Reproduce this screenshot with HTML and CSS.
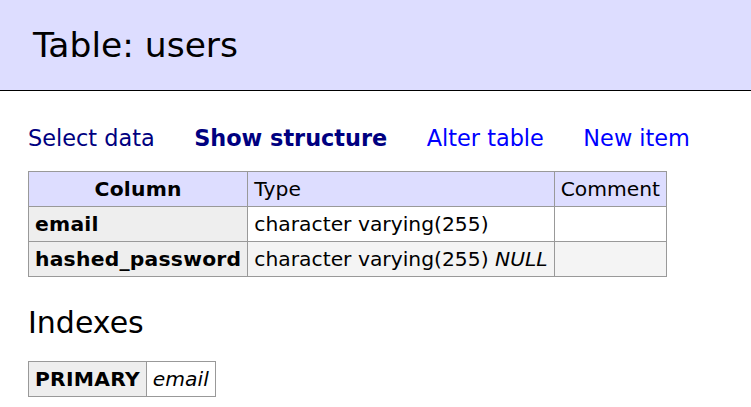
FILE: index.html
```html
<!DOCTYPE html>
<html>
<head>
<meta charset="utf-8">
<title>Table: users</title>
<link rel="stylesheet" href="styles.css">
</head>
<body>
<h2 class="title">Table: users</h2>
<div class="content">
  <nav class="links">
    <a class="visited" href="#">Select data</a>
    <a class="active" href="#">Show structure</a>
    <a href="#">Alter table</a>
    <a href="#">New item</a>
  </nav>
  <table class="grid">
    <thead>
      <tr><th>Column</th><td>Type</td><td>Comment</td></tr>
    </thead>
    <tbody>
      <tr><th>email</th><td>character varying(255)</td><td></td></tr>
      <tr class="odd"><th>hashed_password</th><td>character varying(255) <i>NULL</i></td><td></td></tr>
    </tbody>
  </table>
  <h3 class="section">Indexes</h3>
  <table class="grid">
    <tbody>
      <tr><th>PRIMARY</th><td><i>email</i></td></tr>
    </tbody>
  </table>
</div>
</body>
</html>
```

FILE: styles.css
```css
html, body {
  margin: 0;
  padding: 0;
  background: #fff;
}
body {
  font-family: "DejaVu Sans", Verdana, sans-serif;
  font-size: 22.4px;
  line-height: 26px;
  color: #000;
}
.title {
  margin: 0;
  padding: 26px 33px;
  font-size: 34.5px;
  line-height: 38px;
  font-weight: normal;
  background: #ddf;
  border-bottom: 1px solid #000;
}
.content {
  padding: 34px 28px 0;
}
.links {
  display: flex;
  gap: 39.5px;
  margin-bottom: 20px;
}
.links a {
  color: #00f;
  text-decoration: none;
}
.links a.visited {
  color: #000080;
}
.links a.active {
  color: #000080;
  font-weight: bold;
}
.grid {
  border-collapse: collapse;
  font-size: 20.3px;
}
.grid th, .grid td {
  border: 1px solid #999;
  padding: 4.5px 6px;
  line-height: 25px;
  text-align: left;
  vertical-align: top;
  background: #fff;
}
.grid th {
  background: #eee;
  font-weight: bold;
  letter-spacing: 0.25px;
}
.grid thead th, .grid thead td {
  background: #ddf;
}
.grid thead th {
  text-align: center;
}
.grid tr.odd td {
  background: #f4f4f4;
}
.section {
  margin: 28px 0 20px;
  font-size: 30px;
  line-height: 36px;
  font-weight: normal;
}
```
